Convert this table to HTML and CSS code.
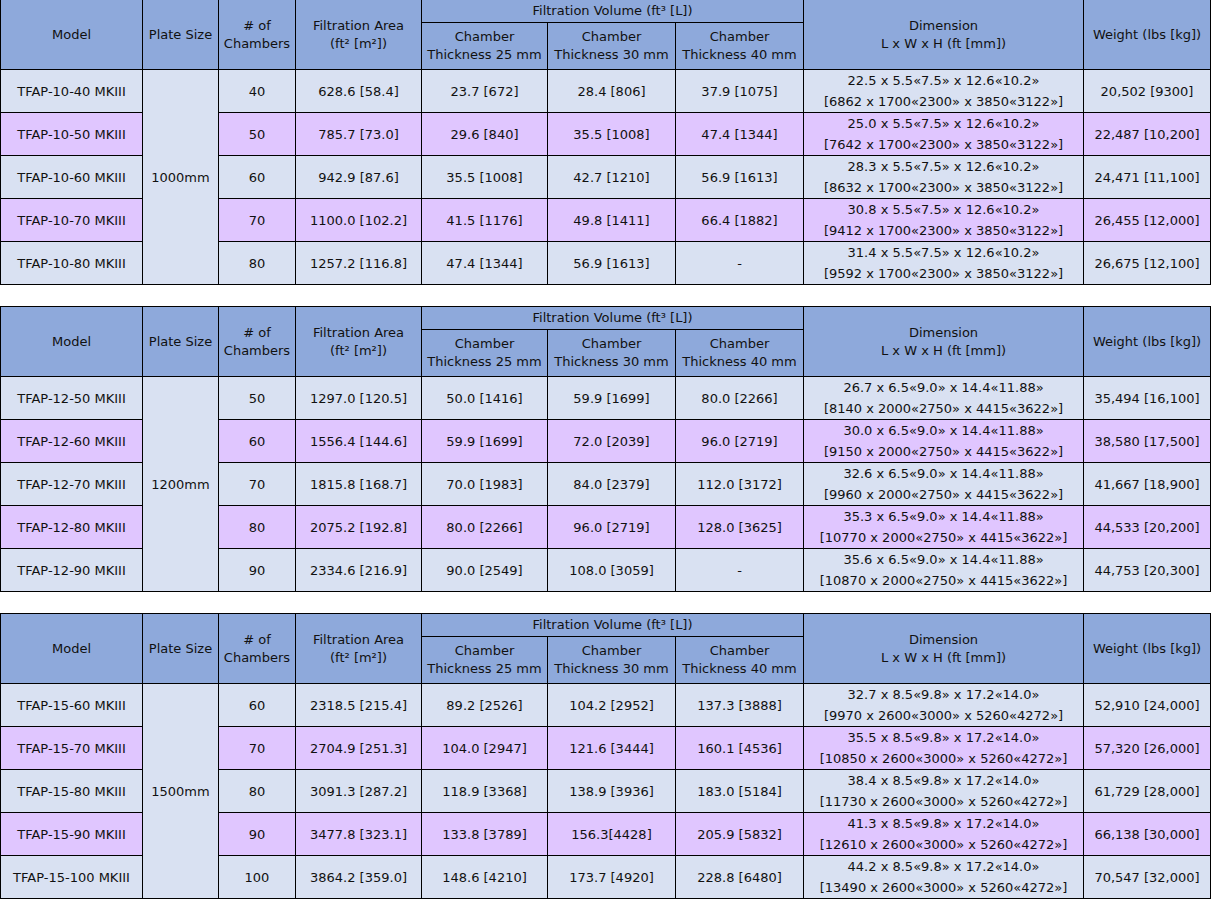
FILE: index.html
```html
<!DOCTYPE html>
<html>
<head>
<meta charset="utf-8">
<link rel="stylesheet" href="styles.css">
</head>
<body>
<div class="page">
<table class="spec">
<colgroup><col class="c1"><col class="c2"><col class="c3"><col class="c4"><col class="c5"><col class="c6"><col class="c7"><col class="c8"><col class="c9"></colgroup>
<thead>
<tr class="h1"><th rowspan="2">Model</th><th rowspan="2">Plate Size</th><th rowspan="2"># of<br>Chambers</th><th rowspan="2">Filtration Area<br>(ft² [m²])</th><th colspan="3">Filtration Volume (ft³ [L])</th><th rowspan="2">Dimension<br>L x W x H (ft [mm])</th><th rowspan="2">Weight (lbs [kg])</th></tr>
<tr class="h2"><th>Chamber<br>Thickness 25 mm</th><th>Chamber<br>Thickness 30 mm</th><th>Chamber<br>Thickness 40 mm</th></tr>
</thead>
<tbody>
<tr class="a"><td>TFAP-10-40 MKIII</td><td class="plate" rowspan="5">1000mm</td><td>40</td><td>628.6 [58.4]</td><td>23.7 [672]</td><td>28.4 [806]</td><td>37.9 [1075]</td><td>22.5 x 5.5«7.5» x 12.6«10.2»<br>[6862 x 1700«2300» x 3850«3122»]</td><td>20,502 [9300]</td></tr>
<tr class="b"><td>TFAP-10-50 MKIII</td><td>50</td><td>785.7 [73.0]</td><td>29.6 [840]</td><td>35.5 [1008]</td><td>47.4 [1344]</td><td>25.0 x 5.5«7.5» x 12.6«10.2»<br>[7642 x 1700«2300» x 3850«3122»]</td><td>22,487 [10,200]</td></tr>
<tr class="a"><td>TFAP-10-60 MKIII</td><td>60</td><td>942.9 [87.6]</td><td>35.5 [1008]</td><td>42.7 [1210]</td><td>56.9 [1613]</td><td>28.3 x 5.5«7.5» x 12.6«10.2»<br>[8632 x 1700«2300» x 3850«3122»]</td><td>24,471 [11,100]</td></tr>
<tr class="b"><td>TFAP-10-70 MKIII</td><td>70</td><td>1100.0 [102.2]</td><td>41.5 [1176]</td><td>49.8 [1411]</td><td>66.4 [1882]</td><td>30.8 x 5.5«7.5» x 12.6«10.2»<br>[9412 x 1700«2300» x 3850«3122»]</td><td>26,455 [12,000]</td></tr>
<tr class="a"><td>TFAP-10-80 MKIII</td><td>80</td><td>1257.2 [116.8]</td><td>47.4 [1344]</td><td>56.9 [1613]</td><td>-</td><td>31.4 x 5.5«7.5» x 12.6«10.2»<br>[9592 x 1700«2300» x 3850«3122»]</td><td>26,675 [12,100]</td></tr>
</tbody>
</table>

<table class="spec">
<colgroup><col class="c1"><col class="c2"><col class="c3"><col class="c4"><col class="c5"><col class="c6"><col class="c7"><col class="c8"><col class="c9"></colgroup>
<thead>
<tr class="h1"><th rowspan="2">Model</th><th rowspan="2">Plate Size</th><th rowspan="2"># of<br>Chambers</th><th rowspan="2">Filtration Area<br>(ft² [m²])</th><th colspan="3">Filtration Volume (ft³ [L])</th><th rowspan="2">Dimension<br>L x W x H (ft [mm])</th><th rowspan="2">Weight (lbs [kg])</th></tr>
<tr class="h2"><th>Chamber<br>Thickness 25 mm</th><th>Chamber<br>Thickness 30 mm</th><th>Chamber<br>Thickness 40 mm</th></tr>
</thead>
<tbody>
<tr class="a"><td>TFAP-12-50 MKIII</td><td class="plate" rowspan="5">1200mm</td><td>50</td><td>1297.0 [120.5]</td><td>50.0 [1416]</td><td>59.9 [1699]</td><td>80.0 [2266]</td><td>26.7 x 6.5«9.0» x 14.4«11.88»<br>[8140 x 2000«2750» x 4415«3622»]</td><td>35,494 [16,100]</td></tr>
<tr class="b"><td>TFAP-12-60 MKIII</td><td>60</td><td>1556.4 [144.6]</td><td>59.9 [1699]</td><td>72.0 [2039]</td><td>96.0 [2719]</td><td>30.0 x 6.5«9.0» x 14.4«11.88»<br>[9150 x 2000«2750» x 4415«3622»]</td><td>38,580 [17,500]</td></tr>
<tr class="a"><td>TFAP-12-70 MKIII</td><td>70</td><td>1815.8 [168.7]</td><td>70.0 [1983]</td><td>84.0 [2379]</td><td>112.0 [3172]</td><td>32.6 x 6.5«9.0» x 14.4«11.88»<br>[9960 x 2000«2750» x 4415«3622»]</td><td>41,667 [18,900]</td></tr>
<tr class="b"><td>TFAP-12-80 MKIII</td><td>80</td><td>2075.2 [192.8]</td><td>80.0 [2266]</td><td>96.0 [2719]</td><td>128.0 [3625]</td><td>35.3 x 6.5«9.0» x 14.4«11.88»<br>[10770 x 2000«2750» x 4415«3622»]</td><td>44,533 [20,200]</td></tr>
<tr class="a"><td>TFAP-12-90 MKIII</td><td>90</td><td>2334.6 [216.9]</td><td>90.0 [2549]</td><td>108.0 [3059]</td><td>-</td><td>35.6 x 6.5«9.0» x 14.4«11.88»<br>[10870 x 2000«2750» x 4415«3622»]</td><td>44,753 [20,300]</td></tr>
</tbody>
</table>

<table class="spec">
<colgroup><col class="c1"><col class="c2"><col class="c3"><col class="c4"><col class="c5"><col class="c6"><col class="c7"><col class="c8"><col class="c9"></colgroup>
<thead>
<tr class="h1"><th rowspan="2">Model</th><th rowspan="2">Plate Size</th><th rowspan="2"># of<br>Chambers</th><th rowspan="2">Filtration Area<br>(ft² [m²])</th><th colspan="3">Filtration Volume (ft³ [L])</th><th rowspan="2">Dimension<br>L x W x H (ft [mm])</th><th rowspan="2">Weight (lbs [kg])</th></tr>
<tr class="h2"><th>Chamber<br>Thickness 25 mm</th><th>Chamber<br>Thickness 30 mm</th><th>Chamber<br>Thickness 40 mm</th></tr>
</thead>
<tbody>
<tr class="a"><td>TFAP-15-60 MKIII</td><td class="plate" rowspan="5">1500mm</td><td>60</td><td>2318.5 [215.4]</td><td>89.2 [2526]</td><td>104.2 [2952]</td><td>137.3 [3888]</td><td>32.7 x 8.5«9.8» x 17.2«14.0»<br>[9970 x 2600«3000» x 5260«4272»]</td><td>52,910 [24,000]</td></tr>
<tr class="b"><td>TFAP-15-70 MKIII</td><td>70</td><td>2704.9 [251.3]</td><td>104.0 [2947]</td><td>121.6 [3444]</td><td>160.1 [4536]</td><td>35.5 x 8.5«9.8» x 17.2«14.0»<br>[10850 x 2600«3000» x 5260«4272»]</td><td>57,320 [26,000]</td></tr>
<tr class="a"><td>TFAP-15-80 MKIII</td><td>80</td><td>3091.3 [287.2]</td><td>118.9 [3368]</td><td>138.9 [3936]</td><td>183.0 [5184]</td><td>38.4 x 8.5«9.8» x 17.2«14.0»<br>[11730 x 2600«3000» x 5260«4272»]</td><td>61,729 [28,000]</td></tr>
<tr class="b"><td>TFAP-15-90 MKIII</td><td>90</td><td>3477.8 [323.1]</td><td>133.8 [3789]</td><td>156.3[4428]</td><td>205.9 [5832]</td><td>41.3 x 8.5«9.8» x 17.2«14.0»<br>[12610 x 2600«3000» x 5260«4272»]</td><td>66,138 [30,000]</td></tr>
<tr class="a"><td>TFAP-15-100 MKIII</td><td>100</td><td>3864.2 [359.0]</td><td>148.6 [4210]</td><td>173.7 [4920]</td><td>228.8 [6480]</td><td>44.2 x 8.5«9.8» x 17.2«14.0»<br>[13490 x 2600«3000» x 5260«4272»]</td><td>70,547 [32,000]</td></tr>
</tbody>
</table>
</div>
</body>
</html>
```
FILE: styles.css
```css
html, body {
  margin: 0;
  padding: 0;
  background: #ffffff;
}
.page {
  display: flex;
  flex-direction: column;
  gap: 21px;
  margin-top: -1px;
}
.spec {
  border-collapse: collapse;
  table-layout: fixed;
  width: 1211px;
  font-family: "DejaVu Sans", Verdana, sans-serif;
  font-size: 13px;
  color: #111;
}
.c1 { width: 142px; }
.c2 { width: 76px; }
.c3 { width: 77px; }
.c4 { width: 126px; }
.c5 { width: 126px; }
.c6 { width: 128px; }
.c7 { width: 128px; }
.c8 { width: 280px; }
.c9 { width: 127px; }
.spec th, .spec td {
  border: 1px solid #000;
  padding: 0;
  text-align: center;
  vertical-align: middle;
  white-space: nowrap;
  overflow: hidden;
}
.spec th {
  background: #8ea9db;
  font-weight: normal;
  line-height: 18px;
}
.spec .h1 th { height: 22px; }
.spec .h2 th { height: 46px; }
.spec td {
  line-height: 21px;
  height: 42px;
}
.spec tr.a td { background: #d9e1f2; }
.spec tr.b td { background: #e0c6ff; }
.spec tr td.plate { background: #d9e1f2; }
```
